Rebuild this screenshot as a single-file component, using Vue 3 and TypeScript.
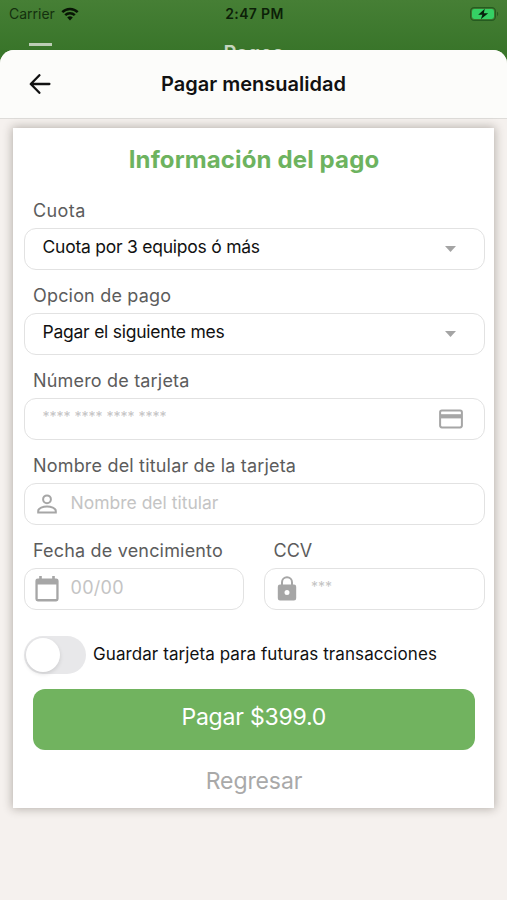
<script setup lang="ts">
import { ref } from 'vue'

interface SelectField {
  id: string
  label: string
  value: string
}

const selects: SelectField[] = [
  { id: 'cuota', label: 'Cuota', value: 'Cuota por 3 equipos ó más' },
  { id: 'opcion', label: 'Opcion de pago', value: 'Pagar el siguiente mes' },
]

const amount = ref('399.0')
const saveCard = ref(false)
</script>

<template>
  <div class="screen">
    <div class="backdrop">
      <div class="status">
        <div class="carrier">
          <span class="carrier-name">Carrier</span>
          <svg class="wifi" viewBox="0 0 18 14" width="18" height="14">
            <path d="M1.3 5.2a11 11 0 0 1 15.4 0" />
            <path d="M4.2 8.1a6.9 6.9 0 0 1 9.6 0" />
            <path class="solid" d="M9 13.5 6.2 10.6a4 4 0 0 1 5.6 0z" />
          </svg>
        </div>
        <span class="time">2:47 PM</span>
        <svg class="battery" viewBox="0 0 30 14" width="30" height="14">
          <rect x=".6" y=".6" width="24.8" height="12.8" rx="3.6" class="shell" />
          <rect x="2" y="2" width="22" height="10" rx="2.4" class="charge" />
          <path d="M27 4.8v4.4c1.6-.6 1.6-3.8 0-4.4z" class="tip" />
          <path d="M14.8 1.8 8.2 7.8h4.2L10.8 12.2l7.4-6h-4.4z" class="bolt" />
        </svg>
      </div>
      <div class="under-nav">
        <span class="menu-line"></span>
        <span class="under-title">Pagos</span>
      </div>
    </div>

    <main class="sheet">
      <header class="header">
        <button class="back" type="button" aria-label="Regresar">
          <svg viewBox="0 0 22 20" width="22" height="20">
            <path d="M10.4 1.2 1.8 10l8.6 8.8M2 10h18.4" />
          </svg>
        </button>
        <h1 class="heading">Pagar mensualidad</h1>
      </header>

      <section class="card">
        <h2 class="title"><span>Información del pago</span></h2>

        <div v-for="field in selects" :key="field.id" class="field">
          <span class="label" :class="`label-${field.id}`">{{ field.label }}</span>
          <div class="box select">
            <span class="value">{{ field.value }}</span>
            <svg class="caret" viewBox="0 0 11 6" width="11" height="6"><path d="M0 0h11L5.5 6z" /></svg>
          </div>
        </div>

        <div class="field">
          <span class="label">Número de tarjeta</span>
          <div class="box number">
            <span class="stars">**** **** **** ****</span>
            <svg class="icon" viewBox="0 0 24 20" width="24" height="20">
              <rect x="1.1" y="1.4" width="21.8" height="17" rx="1.8" class="stroke" />
              <path d="M1 5.2h22v4.2H1z" />
            </svg>
          </div>
        </div>

        <div class="field">
          <span class="label">Nombre del titular de la tarjeta</span>
          <div class="box holder">
            <svg class="icon" viewBox="0 0 20 20" width="20" height="20">
              <circle cx="10" cy="5.3" r="3.9" class="stroke" />
              <path d="M1.2 18.4v-1.5c0-2.9 5-4.5 8.8-4.5s8.8 1.6 8.8 4.5v1.5z" class="stroke" />
            </svg>
            <span class="hint">Nombre del titular</span>
          </div>
        </div>

        <div class="pair">
          <div class="field">
            <span class="label">Fecha de vencimiento</span>
            <div class="box date">
              <svg class="icon" viewBox="0 0 24 26" width="24" height="26">
                <path d="M4.2 0h2.6v2.4h10.4V0h2.6v2.4h1.4A2.4 2.4 0 0 1 23.6 4.8V23a2.4 2.4 0 0 1-2.4 2.4H2.8A2.4 2.4 0 0 1 .4 23V4.8A2.4 2.4 0 0 1 2.8 2.4h1.4zM2.7 8.4v14.7h18.6V8.4z" fill-rule="evenodd" />
              </svg>
              <span class="hint hint-date">00/00</span>
            </div>
          </div>
          <div class="field">
            <span class="label label-ccv">CCV</span>
            <div class="box ccv">
              <svg class="icon" viewBox="0 0 20 26" width="20" height="26">
                <path d="M5 9V6.2a5 5 0 0 1 10 0V9" class="stroke" />
                <path d="M3 8.5h14a2.2 2.2 0 0 1 2.2 2.2v11.6a2.2 2.2 0 0 1-2.2 2.2H3a2.2 2.2 0 0 1-2.2-2.2V10.7A2.2 2.2 0 0 1 3 8.5zm7 5.6a2.5 2.5 0 1 0 0 5 2.5 2.5 0 0 0 0-5z" fill-rule="evenodd" />
              </svg>
              <span class="stars">***</span>
            </div>
          </div>
        </div>

        <div class="save">
          <button class="toggle" type="button" role="switch" :aria-checked="saveCard" @click="saveCard = !saveCard">
            <span class="knob" :class="{ on: saveCard }"></span>
          </button>
          <span class="save-text">Guardar tarjeta para futuras transacciones</span>
        </div>

        <button class="pay" type="button"><span>Pagar ${{ amount }}</span></button>
        <button class="cancel" type="button"><span>Regresar</span></button>
      </section>
    </main>
  </div>
</template>

<style>
body {
  background: #f5f1ee;
}
</style>

<style scoped>
.screen {
  height: 900px;
  overflow: hidden;
  background: #f5f1ee;
  font-family: Inter, 'Liberation Sans', sans-serif;
  color: #111;
}
button {
  border: 0;
  padding: 0;
  background: none;
  font: inherit;
  color: inherit;
}
.backdrop {
  height: 76px;
  box-sizing: border-box;
  margin-bottom: -26px;
  background: linear-gradient(#467f35, #39752a 50px);
}
.status {
  display: grid;
  grid-template-columns: 1fr auto 1fr;
  align-items: center;
  height: 27px;
  padding: 0 7px 0 9px;
}
.carrier {
  display: flex;
  align-items: center;
  gap: 6px;
  color: #14300e;
  font-size: 14px;
}
.wifi {
  fill: none;
  stroke: #081505;
  stroke-width: 2.5;
}
.wifi .solid {
  fill: #081505;
  stroke: none;
}
.time {
  font-size: 14px;
  font-weight: 600;
  letter-spacing: .35px;
  color: #0c1f08;
}
.battery {
  justify-self: end;
}
.shell {
  fill: none;
  stroke: #255b20;
  stroke-width: 1.2;
}
.charge {
  fill: #35d164;
}
.tip {
  fill: #255b20;
}
.bolt {
  fill: #06210c;
}
.under-nav {
  display: grid;
  grid-template-columns: 1fr auto 1fr;
  height: 49px;
}
.menu-line {
  width: 23px;
  height: 3px;
  margin: 16px 0 0 29px;
  background: #bccdb5;
}
.under-title {
  padding-top: 14px;
  font-size: 20px;
  line-height: 24px;
  font-weight: 600;
  color: #c5d5bf;
}
.sheet {
  position: relative;
  height: 850px;
  border-radius: 14px 14px 0 0;
  background: #f5f1ee;
}
.header {
  display: grid;
  grid-template-columns: 1fr auto 1fr;
  align-items: center;
  height: 69px;
  box-sizing: border-box;
  border-bottom: 1px solid #dedcd9;
  border-radius: 14px 14px 0 0;
  background: #fcfcfa;
}
.back {
  width: 22px;
  height: 20px;
  margin-left: 29px;
}
.back svg {
  display: block;
  fill: none;
  stroke: #111;
  stroke-width: 2.3;
  stroke-linecap: round;
  stroke-linejoin: round;
}
.heading {
  margin: 0;
  font-size: 20px;
  line-height: 24px;
  font-weight: 600;
}
.card {
  display: flex;
  flex-direction: column;
  height: 680px;
  margin: 9px 13px 0;
  box-sizing: border-box;
  padding: 0 9.5px 0 10.5px;
  background: #fff;
  box-shadow: 0 0 9px 1px rgba(40, 30, 20, .3);
}
.title {
  height: 63px;
  margin: 0;
  line-height: 63px;
  font-size: 24px;
  font-weight: 700;
  letter-spacing: .13px;
  text-align: center;
  color: #6db35f;
}
.field {
  display: flex;
  flex-direction: column;
  flex: none;
  height: 85px;
}
.title + .field {
  margin-top: -6px;
}
.label {
  height: 43px;
  padding-left: 9.5px;
  line-height: 51px;
  font-size: 18px;
  letter-spacing: .18px;
  color: #5c5c5c;
  white-space: nowrap;
}
.label-cuota {
  letter-spacing: .4px;
}
.label-ccv {
  letter-spacing: 0;
}
.box {
  display: flex;
  align-items: center;
  flex: none;
  height: 42px;
  box-sizing: border-box;
  border: 1.5px solid #e2e2e2;
  border-radius: 12px;
  white-space: nowrap;
}
.select {
  justify-content: space-between;
  padding: 0 28px 0 18px;
}
.value {
  padding-bottom: 5px;
  font-size: 17.5px;
  letter-spacing: -.24px;
  color: #111;
}
.caret {
  fill: #a4a4a4;
}
.icon {
  flex: none;
  fill: #a6a6a6;
}
.stroke {
  fill: none;
  stroke: #a6a6a6;
  stroke-width: 2;
}
.number {
  justify-content: space-between;
  padding: 0 20.5px 0 18px;
}
.stars {
  padding-bottom: 6px;
  font-size: 14px;
  color: #c4c4c4;
}
.holder {
  gap: 14px;
  padding-left: 12px;
}
.hint {
  padding-bottom: 3px;
  font-size: 17.5px;
  color: #c4c4c4;
}
.hint-date {
  font-size: 18px;
  letter-spacing: .3px;
}
.pair {
  display: grid;
  grid-template-columns: 1fr 1fr;
  gap: 20px;
}
.date {
  gap: 12px;
  padding-left: 10px;
}
.ccv {
  gap: 14px;
  padding-left: 12px;
}
.save {
  display: flex;
  align-items: center;
  height: 38px;
  margin-top: 26px;
}
.toggle {
  width: 62px;
  height: 38px;
  flex: none;
  box-sizing: border-box;
  padding: 2px;
  border-radius: 19px;
  background: #e8e8ea;
}
.knob {
  display: block;
  width: 34px;
  height: 34px;
  border-radius: 50%;
  background: #fff;
  box-shadow: 0 2px 4px rgba(0, 0, 0, .12);
}
.knob.on {
  margin-left: auto;
}
.save-text {
  padding: 0 0 3px 7.5px;
  font-size: 17px;
  letter-spacing: .08px;
  white-space: nowrap;
}
.pay {
  height: 61px;
  margin: 15px 10px 0 9.5px;
  padding-bottom: 5px;
  border-radius: 12px;
  background: #71b35f;
  color: #fff;
  font-size: 23px;
  letter-spacing: -.22px;
}
.cancel {
  height: 58px;
  padding-top: 4px;
  font-size: 23px;
  letter-spacing: -.1px;
  color: #a9a9a9;
}
</style>
